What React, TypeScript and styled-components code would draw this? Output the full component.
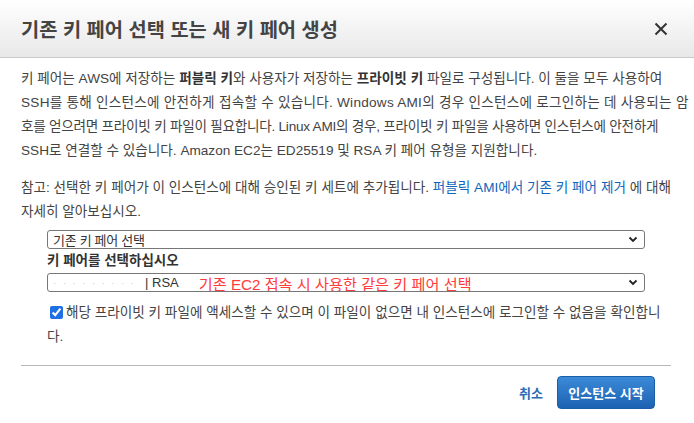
import React from "react";
import styled, { createGlobalStyle } from "styled-components";

const GlobalStyle = createGlobalStyle`
  body {
    margin: 0;
    background: #fff;
    font-family: "Liberation Sans", "Noto Sans CJK KR", sans-serif;
    color: #444;
  }
`

const Dialog = styled.div`
  width: 694px;
  min-height: 423px;
  background: #fff;
  display: flex;
  flex-direction: column;
`

const Header = styled.div`
  flex-shrink: 0;
  height: 57px;
  padding: 0 26px 0 21px;
  display: flex;
  align-items: center;
  justify-content: space-between;
  background: linear-gradient(#ffffff, #e8e8e8);
  border-bottom: 1px solid #c9c9c9;
`

const Title = styled.h2`
  margin: 0 0 1px;
  font-size: 19.8px;
  font-weight: 700;
  color: #444;
`

const CloseIcon = styled.div`
  width: 14px;
  height: 14px;
  cursor: pointer;
  display: flex;
`

const Body = styled.div`
  padding: 9px 23px 0 21px;
`

const Paragraph = styled.p`
  margin: 0 0 13px;
  font-size: 13.6px;
  line-height: 24px;
  color: #444;
  white-space: nowrap;

  b {
    color: #333;
  }
`

const Line = styled.span<{ $tight?: boolean; $loose?: boolean }>`
  letter-spacing: ${({ $tight, $loose }) => ($tight ? "-0.25px" : $loose ? "0.25px" : "0")};
`

const Link = styled.a`
  color: #1166bb;
  text-decoration: none;
`

const Form = styled.div`
  padding: 0 5px 0 26px;
  margin-top: -7px;
`

const SelectBox = styled.div`
  width: 598px;
  height: 19px;
  box-sizing: border-box;
  border: 1px solid #777;
  border-radius: 3px;
  display: flex;
  align-items: center;
  padding: 0 6px 0 5px;
  font-size: 13px;
  color: #333;
  white-space: nowrap;
  overflow: hidden;
`

const SelectText = styled.span`
  flex: 1;
  display: flex;
  align-items: center;
  letter-spacing: -0.3px;
`

const Hidden = styled.span`
  display: inline-block;
  width: 92px;
  color: #d6d6d6;
  letter-spacing: 6px;
  font-size: 11px;
`

const Plain = styled.span`
  letter-spacing: 0;
`

const Note = styled.span`
  color: #ff3b3b;
  font-size: 15.2px;
  letter-spacing: 0;
  margin-left: 20px;
`

const Label = styled.div`
  font-size: 13.5px;
  font-weight: 700;
  color: #333;
  line-height: 24px;
`

const CheckRow = styled.label`
  display: block;
  margin-top: 9px;
  font-size: 13.6px;
  line-height: 24px;
  color: #444;
  white-space: nowrap;

  input {
    width: 13px;
    height: 13px;
    margin: 0 3px 0 3px;
    vertical-align: -2px;
    accent-color: #1f6fe5;
  }
`

const Divider = styled.hr`
  flex-shrink: 0;
  margin: 16px 23px 0 21px;
  border: none;
  border-top: 1px solid #b8b8b8;
`

const Footer = styled.div`
  flex-shrink: 0;
  display: flex;
  justify-content: flex-end;
  align-items: center;
  gap: 14px;
  padding: 10px 39px 0 0;
`

const CancelLink = styled.a`
  color: #2a6db5;
  font-weight: 700;
  font-size: 13px;
  cursor: pointer;
`

const PrimaryButton = styled.button`
  height: 33px;
  width: 98px;
  border: 1px solid #1b5ea8;
  border-radius: 4px;
  background: linear-gradient(#3b8ad8, #1d62b2);
  color: #fff;
  font-family: inherit;
  font-weight: 700;
  font-size: 13px;
  cursor: pointer;
`

function Chevron() {
  return (
    <svg width="10" height="7" viewBox="0 0 10 7">
      <path d="M1.5 1.5 L5 5 L8.5 1.5" fill="none" stroke="#222" strokeWidth="1.8"/>
    </svg>
  )
}

export default function App() {
  return (
    <>
      <GlobalStyle/>
      <Dialog>
        <Header>
          <Title>기존 키 페어 선택 또는 새 키 페어 생성</Title>
          <CloseIcon>
            <svg width="14" height="14" viewBox="0 0 14 14">
              <path d="M1.5 1.5 L12.5 12.5 M12.5 1.5 L1.5 12.5" stroke="#333" strokeWidth="2"/>
            </svg>
          </CloseIcon>
        </Header>
        <Body>
          <Paragraph>
            <Line>키 페어는 AWS에 저장하는 <b>퍼블릭 키</b>와 사용자가 저장하는 <b>프라이빗 키</b> 파일로 구성됩니다. 이 둘을 모두 사용하여</Line><br/>
            <Line $loose>SSH를 통해 인스턴스에 안전하게 접속할 수 있습니다. Windows AMI의 경우 인스턴스에 로그인하는 데 사용되는 암</Line><br/>
            <Line $tight>호를 얻으려면 프라이빗 키 파일이 필요합니다. Linux AMI의 경우, 프라이빗 키 파일을 사용하면 인스턴스에 안전하게</Line><br/>
            <Line>SSH로 연결할 수 있습니다. Amazon EC2는 ED25519 및 RSA 키 페어 유형을 지원합니다.</Line>
          </Paragraph>
          <Paragraph>
            참고: 선택한 키 페어가 이 인스턴스에 대해 승인된 키 세트에 추가됩니다. <Link href="#">퍼블릭 AMI에서 기존 키 페어 제거</Link> 에 대해<br/>
            자세히 알아보십시오.
          </Paragraph>
          <Form>
            <SelectBox>
              <SelectText>기존 키 페어 선택</SelectText>
              <Chevron/>
            </SelectBox>
            <Label>키 페어를 선택하십시오</Label>
            <SelectBox>
              <SelectText>
                <Hidden>·········</Hidden><Plain>| RSA</Plain>
                <Note>기존 EC2 접속 시 사용한 같은 키 페어 선택</Note>
              </SelectText>
              <Chevron/>
            </SelectBox>
            <CheckRow>
              <input type="checkbox" checked readOnly/>해당 프라이빗 키 파일에 액세스할 수 있으며 이 파일이 없으면 내 인스턴스에 로그인할 수 없음을 확인합니<br/>
              다.
            </CheckRow>
          </Form>
        </Body>
        <Divider/>
        <Footer>
          <CancelLink>취소</CancelLink>
          <PrimaryButton>인스턴스 시작</PrimaryButton>
        </Footer>
      </Dialog>
    </>
  )
}
